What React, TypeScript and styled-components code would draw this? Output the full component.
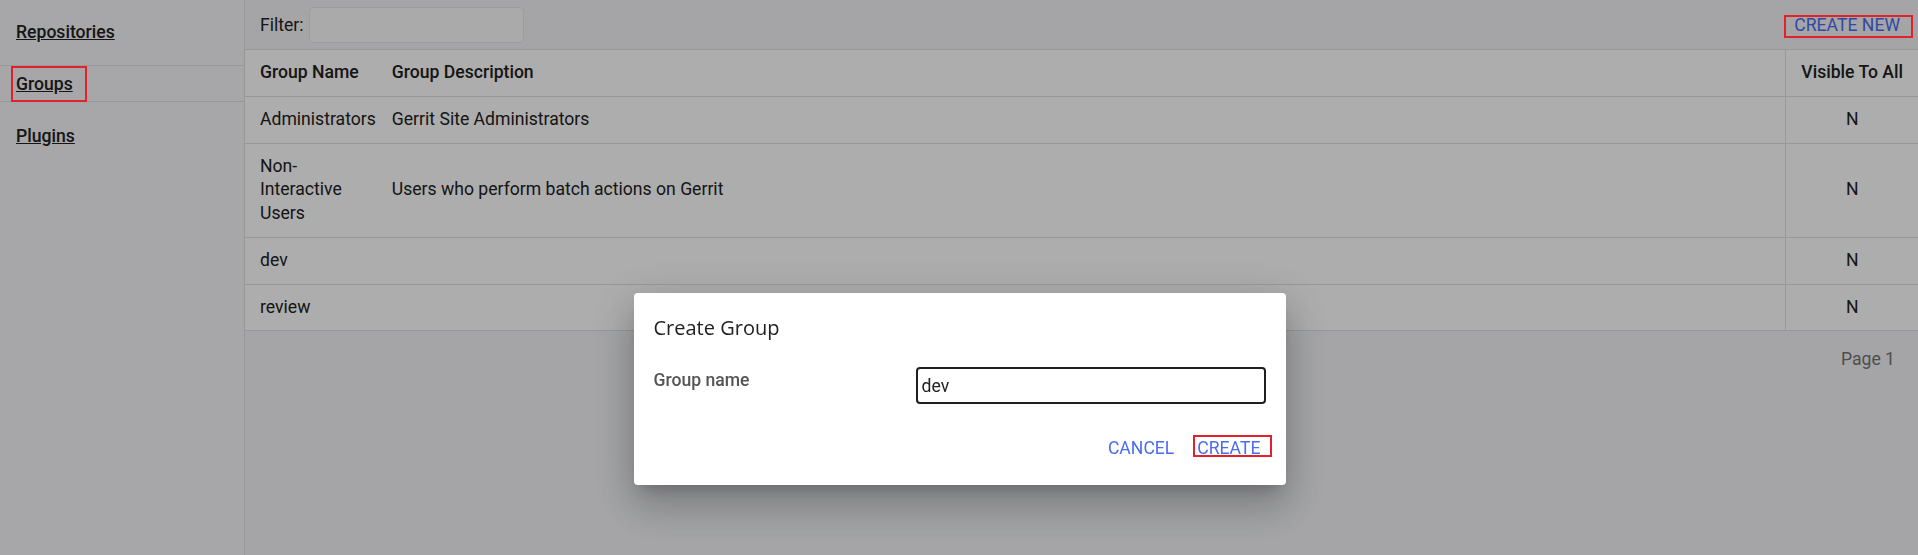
import React from 'react'
import styled, { createGlobalStyle } from 'styled-components'

const GlobalStyle = createGlobalStyle`
  html, body {
    margin: 0;
    padding: 0;
  }
  body {
    font-family: Roboto, 'Liberation Sans', Arial, sans-serif;
    font-size: 17.6px;
    color: #212121;
  }
  * {
    box-sizing: border-box;
  }
`

const border = '#e0e0e0'
const link = '#4a6cf0'

interface Group {
  name: string
  description: string
  visible: string
}

const groups: Group[] = [
  { name: 'Administrators', description: 'Gerrit Site Administrators', visible: 'N' },
  {
    name: 'Non-Interactive Users',
    description: 'Users who perform batch actions on Gerrit',
    visible: 'N',
  },
  { name: 'dev', description: '', visible: 'N' },
  { name: 'review', description: '', visible: 'N' },
]

const Page = styled.div`
  display: flex;
  height: 100vh;
  background: #f3f4f7;
`

const Sidebar = styled.nav`
  width: 245px;
  flex-shrink: 0;
  border-right: 1px solid ${border};
  background: #f6f7f9;
  padding-top: 13px;
  display: flex;
  flex-direction: column;
  gap: 15px;
`

const NavItem = styled.div<{ $selected?: boolean }>`
  height: 37px;
  display: flex;
  align-items: center;
  padding: 0 16px;
  border-top: 1px solid ${(p) => (p.$selected ? border : 'transparent')};
  border-bottom: 1px solid ${(p) => (p.$selected ? border : 'transparent')};
`

const NavLink = styled.a`
  color: #212121;
  font-weight: 500;
  line-height: 24px;
  text-decoration: underline;
  cursor: pointer;
`

// red annotation frame drawn over the dimmed page
const Annotated = styled.span<{ $inset: string }>`
  position: relative;
  &::after {
    content: '';
    position: absolute;
    inset: ${(p) => p.$inset};
    border: 2px solid #e4202b;
    z-index: 1100;
    pointer-events: none;
  }
`

const Main = styled.main`
  flex: 1;
  min-width: 0;
  display: flex;
  flex-direction: column;
`

const FilterBar = styled.div`
  height: 50px;
  flex-shrink: 0;
  display: flex;
  align-items: center;
  justify-content: space-between;
  padding: 0 10px 0 15px;
  border-bottom: 1px solid ${border};
`

const FilterGroup = styled.label`
  display: flex;
  align-items: center;
  gap: 5px;
  line-height: 24px;
`

const FilterInput = styled.input`
  width: 215px;
  height: 36px;
  border: 1px solid #e6e8eb;
  border-radius: 4px;
  background: #fbfbfc;
  font: inherit;
  padding: 0 8px;
`

const TextButton = styled.button`
  background: none;
  border: none;
  padding: 0 8px;
  font-family: Roboto, 'Liberation Sans', Arial, sans-serif;
  font-size: 17.6px;
  line-height: 24px;
  text-transform: uppercase;
  color: ${link};
  cursor: pointer;
`

const Table = styled.table`
  width: 100%;
  border-collapse: collapse;
  background: #fff;
`

type Col = 'name' | 'desc' | 'visible'

const cellStyle = (col: Col) => `
  padding: 11px ${col === 'visible' ? '15px' : '8px'} 11px ${
  col === 'name' ? '15px' : col === 'visible' ? '15px' : '8px'
};
  line-height: 1.35;
  vertical-align: middle;
  border-bottom: 1px solid ${border};
  ${col === 'desc' ? 'width: 100%;' : ''}
  ${col === 'name' ? 'width: 1px;' : ''}
  ${
    col === 'visible'
      ? `text-align: center; white-space: nowrap; border-left: 1px solid ${border};`
      : 'text-align: left;'
  }
`

const Th = styled.th<{ $col: Col }>`
  font-weight: 500;
  ${(p) => cellStyle(p.$col)}
`

const Td = styled.td<{ $col: Col }>`
  ${(p) => cellStyle(p.$col)}
`

const Pager = styled.div`
  display: flex;
  justify-content: flex-end;
  padding: 16px 23px;
  line-height: 24px;
  color: #737373;
`

const Backdrop = styled.div`
  position: fixed;
  inset: 0;
  z-index: 1000;
  background: rgba(0, 0, 0, 0.32);
  display: flex;
  justify-content: center;
  align-items: flex-start;
  padding-top: 293px;
`

const Dialog = styled.div`
  width: 652px;
  margin-left: 1px;
  background: #fff;
  border-radius: 4px;
  padding: 23px 20px 25px;
  box-shadow: 0 11px 15px -7px rgba(0, 0, 0, 0.2),
    0 24px 38px 3px rgba(0, 0, 0, 0.14), 0 9px 46px 8px rgba(0, 0, 0, 0.12);
`

const DialogTitle = styled.h2`
  margin: 0;
  font-family: 'Open Sans', 'Liberation Sans', sans-serif;
  font-size: 20px;
  font-weight: 400;
  line-height: 24px;
  color: #212121;
`

const FieldRow = styled.div`
  margin-top: 27px;
  display: flex;
  align-items: flex-start;
`

const FieldLabel = styled.label`
  width: 262px;
  flex-shrink: 0;
  padding-top: 1px;
  font-weight: 500;
  line-height: 24px;
  color: #555;
`

const FieldInput = styled.input`
  flex: 1;
  height: 37px;
  border: 2px solid #1f1f1f;
  border-radius: 4px;
  padding: 0 4px;
  font-family: Roboto, 'Liberation Sans', Arial, sans-serif;
  font-size: 17.6px;
  color: #212121;
  outline: none;
`

const Actions = styled.div`
  margin-top: 32px;
  display: flex;
  justify-content: flex-end;
  gap: 7px;
  margin-right: -3px;
`

const App: React.FC = () => {
  return (
    <>
      <GlobalStyle />
      <Page>
        <Sidebar>
          <NavItem>
            <NavLink>Repositories</NavLink>
          </NavItem>
          <NavItem $selected>
            <Annotated $inset="-6px -14px -6px -5px">
              <NavLink>Groups</NavLink>
            </Annotated>
          </NavItem>
          <NavItem>
            <NavLink>Plugins</NavLink>
          </NavItem>
        </Sidebar>
        <Main>
          <FilterBar>
            <FilterGroup>
              Filter:
              <FilterInput />
            </FilterGroup>
            <TextButton>
              <Annotated $inset="0 -13px -3px -10px">Create New</Annotated>
            </TextButton>
          </FilterBar>
          <Table>
            <thead>
              <tr>
                <Th $col="name">Group Name</Th>
                <Th $col="desc">Group Description</Th>
                <Th $col="visible">Visible To All</Th>
              </tr>
            </thead>
            <tbody>
              {groups.map((g) => (
                <tr key={g.name}>
                  <Td $col="name">{g.name}</Td>
                  <Td $col="desc">{g.description}</Td>
                  <Td $col="visible">{g.visible}</Td>
                </tr>
              ))}
            </tbody>
          </Table>
          <Pager>Page 1</Pager>
        </Main>
      </Page>
      <Backdrop>
        <Dialog>
          <DialogTitle>Create Group</DialogTitle>
          <FieldRow>
            <FieldLabel>Group name</FieldLabel>
            <FieldInput defaultValue="dev" />
          </FieldRow>
          <Actions>
            <TextButton>Cancel</TextButton>
            <TextButton>
              <Annotated $inset="-3px -11px 1px -4px">Create</Annotated>
            </TextButton>
          </Actions>
        </Dialog>
      </Backdrop>
    </>
  )
}

export default App
